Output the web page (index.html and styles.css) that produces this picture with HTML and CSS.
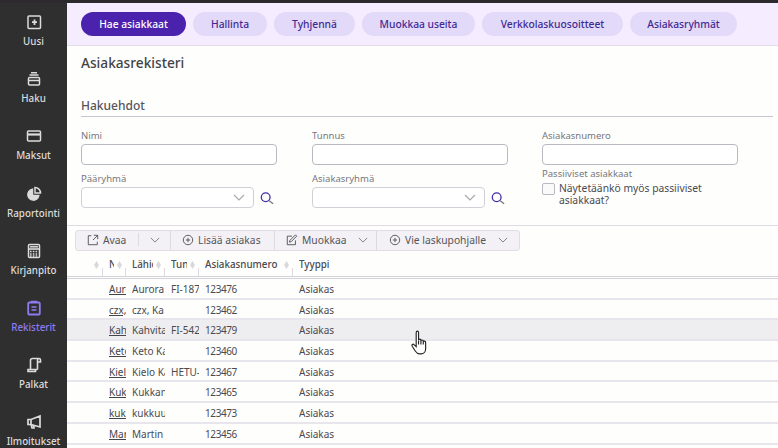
FILE: index.html
```html
<!DOCTYPE html>
<html lang="fi">
<head>
<meta charset="utf-8">
<title>Asiakasrekisteri</title>
<link rel="stylesheet" href="styles.css">
</head>
<body>
<div class="strip"></div>
<div class="app">
  <nav class="side">
    <a class="nav"><svg viewBox="0 0 16 16"><rect x="2" y="2" width="12.500" height="12.500" rx="1"/><path d="M8.500 5.500v5.500M6 8.200h5" stroke-width="1.800"/></svg><span>Uusi</span></a>
    <a class="nav"><svg viewBox="0 0 16 16"><rect x="2.500" y="6.500" width="11" height="7.500" rx="1"/><path d="M2.500 9.500h11M3.500 4h9M5 1.800h6"/></svg><span>Haku</span></a>
    <a class="nav"><svg viewBox="0 0 16 16"><rect x="1.500" y="3" width="13" height="10" rx="1"/><path d="M1.500 6.500h13" stroke-width="2.200"/></svg><span>Maksut</span></a>
    <a class="nav"><svg viewBox="0 0 16 16"><path d="M6.500 3.200a5.500 5.500 0 1 0 6.300 6.300H6.500z" fill="#dcdcdc"/><path d="M9 1.500a5.500 5.500 0 0 1 5.500 5.500H9z"/></svg><span>Raportointi</span></a>
    <a class="nav"><svg viewBox="0 0 16 16"><rect x="2.500" y="1.500" width="11" height="13" rx="1"/><path d="M2.500 6h11" stroke-width="1.600"/><path d="M4 8.500h8M4 11h8M4 13h8" stroke-dasharray="1.600 1.200" stroke-width="1.400"/><path d="M4 3.800h8"/></svg><span>Kirjanpito</span></a>
    <a class="nav on"><svg viewBox="0 0 16 16"><rect x="2.200" y="2.500" width="11.600" height="12" rx="1" stroke-width="1.800"/><path d="M5.500 2.500v-1h5v1M5.500 7h5M5.500 10h5" stroke-width="1.400"/></svg><span>Rekisterit</span></a>
    <a class="nav"><svg viewBox="0 0 16 16"><path d="M4.500 12.500V3.500a2 2 0 0 1 2-2h6.500a1.500 1.500 0 0 1 1.500 1.500v2h-3M11.500 5V3.500a2 2 0 0 1 1-2M11.500 5v7.500M2 12.500h7.500v2H2zM9.500 12.500h2" stroke-width="1.600"/></svg><span>Palkat</span></a>
    <a class="nav"><svg viewBox="0 0 16 16"><path d="M14 2v11L5 10.500H2V5.500h3zM5 5.500v5M5 10.500l1 3.500h2l-.6-2.800" stroke-width="1.700"/></svg><span>Ilmoitukset</span></a>
  </nav>
  <main class="main">
    <header class="bar">
      <button class="pill active">Hae asiakkaat</button>
      <button class="pill w1">Hallinta</button>
      <button class="pill w2">Tyhjennä</button>
      <button class="pill w3">Muokkaa useita</button>
      <button class="pill w4">Verkkolaskuosoitteet</button>
      <button class="pill w5">Asiakasryhmät</button>
    </header>
    <section class="search">
      <h1>Asiakasrekisteri</h1>
      <h2>Hakuehdot</h2>
      <div class="fields">
        <div class="col">
          <label>Nimi</label><div class="input"></div>
          <label class="second">Pääryhmä</label>
          <div class="selrow"><div class="input select"><svg viewBox="0 0 12 7"><path d="M1 1l5 5 5-5"/></svg></div><svg class="lens" viewBox="0 0 16 16"><circle cx="6.500" cy="6.500" r="5"/><path d="M10.500 10.500l4.500 3.500" stroke="#777"/></svg></div>
        </div>
        <div class="col">
          <label>Tunnus</label><div class="input"></div>
          <label class="second">Asiakasryhmä</label>
          <div class="selrow"><div class="input select"><svg viewBox="0 0 12 7"><path d="M1 1l5 5 5-5"/></svg></div><svg class="lens" viewBox="0 0 16 16"><circle cx="6.500" cy="6.500" r="5"/><path d="M10.500 10.500l4.500 3.500" stroke="#777"/></svg></div>
        </div>
        <div class="col">
          <label>Asiakasnumero</label><div class="input"></div>
          <label class="third">Passiiviset asiakkaat</label>
          <div class="check"><span class="box"></span><span class="checktext">Näytetäänkö myös passiiviset asiakkaat?</span></div>
        </div>
      </div>
    </section>
    <section class="results">
      <div class="tools">
        <div class="tool t1"><svg class="ti" viewBox="0 0 14 14"><path d="M5 2H1.500v10.500H12V9M8 1.500h4.500V6M12.500 1.500L7 7"/></svg>Avaa<i class="sep"></i><svg class="chev" viewBox="0 0 12 7"><path d="M1 1l5 5 5-5"/></svg></div>
        <div class="tool t2"><svg class="ti" viewBox="0 0 14 14"><circle cx="7" cy="7" r="5.500"/><path d="M7 4.500v5M4.500 7h5"/></svg>Lisää asiakas</div>
        <div class="tool t3"><svg class="ti" viewBox="0 0 14 14"><path d="M11 7.500v5H1.500V2.500H7M12.500 2.500L6 9l-2 .5.500-2L11 1z"/></svg>Muokkaa<svg class="chev" viewBox="0 0 12 7"><path d="M1 1l5 5 5-5"/></svg></div>
        <div class="tool t4"><svg class="ti" viewBox="0 0 14 14"><circle cx="7" cy="7" r="5.500"/><path d="M7 4.500v5M4.500 7h5"/></svg>Vie laskupohjalle<svg class="chev" viewBox="0 0 12 7"><path d="M1 1l5 5 5-5"/></svg></div>
      </div>
      <div class="grid head">
        <div class="th"><b></b><i class="sort"></i></div>
        <div class="th"><b>Nimi</b><i class="sort"></i></div>
        <div class="th"><b>Lähiosoite</b><i class="sort"></i></div>
        <div class="th"><b>Tunnus</b><i class="sort"></i></div>
        <div class="th"><b>Asiakasnumero</b><i class="sort"></i></div>
        <div class="th last"><b>Tyyppi</b></div>
      </div>
      <div class="grid row"><i></i><a>Aurora Oy</a><span>Aurora</span><span>FI-18765</span><span class="num">123476</span><span>Asiakas</span></div>
      <div class="grid row"><i></i><a>czx, Ka</a><span>czx, Ka</span><span></span><span class="num">123462</span><span>Asiakas</span></div>
      <div class="grid row hover"><i></i><a>Kahvitar</a><span>Kahvitar</span><span>FI-54213</span><span class="num">123479</span><span>Asiakas</span></div>
      <div class="grid row"><i></i><a>Keto Kai</a><span>Keto Kai</span><span></span><span class="num">123460</span><span>Asiakas</span></div>
      <div class="grid row"><i></i><a>Kielo Kai</a><span>Kielo Kai</span><span>HETU-123</span><span class="num">123467</span><span>Asiakas</span></div>
      <div class="grid row"><i></i><a>Kukkanen</a><span>Kukkanen</span><span></span><span class="num">123465</span><span>Asiakas</span></div>
      <div class="grid row"><i></i><a>kukkuu</a><span>kukkuu</span><span></span><span class="num">123473</span><span>Asiakas</span></div>
      <div class="grid row"><i></i><a>Martin</a><span>Martin K</span><span></span><span class="num">123456</span><span>Asiakas</span></div>
      <svg class="cursor" viewBox="0 0 18 26"><path d="M5.500 2.500c0-2 2.500-2 2.500 0v8c0-1.500 2.500-1.500 2.500 0v1c0-1.500 2.500-1.500 2.500 0v1c0-1.300 2.500-1.300 2.500.5v6.500c0 3-2 5.500-5 5.500H9c-2.500 0-3.500-1.500-4.500-3L1.300 17c-1-1.800 1-3 2.200-1.500l2 2z"/><path d="M8 11v4M10.500 11.500V15M13 12.500V15" /></svg>
    </section>
  </main>
</div>
</body>
</html>
```
FILE: styles.css
```css
* { box-sizing: border-box; }
html, body { margin: 0; height: 448px; overflow: hidden; }
body { background: #fefefd; font-family: "Noto Sans", "Open Sans", sans-serif; font-size: 10.500px; color: #4a4a4f; }
.strip { height: 3px; background: #2d2a2e; }
.app { display: flex; height: 445px; overflow: hidden; }

.side { width: 67px; flex: none; background: #2f2f2f; display: flex; flex-direction: column; padding-top: 10px; }
.nav { height: 57.200px; flex: none; display: flex; flex-direction: column; align-items: center; color: #dcdcdc; font-size: 9.800px; font-weight: 500; line-height: 14px; }
.nav svg { width: 16px; height: 16px; margin: 1px 0 5px; fill: none; stroke: #dcdcdc; stroke-width: 1.500; }
.nav.on { color: #8c7cf2; }
.nav.on svg { stroke: #8c7cf2; }

.main { flex: 1; min-width: 0; display: flex; flex-direction: column; }
.bar { height: 43px; flex: none; display: flex; align-items: flex-start; gap: 7px; padding: 9px 0 0 14px; background: #f6ecff; border-bottom: 1px solid #e2dde8; }
.pill { height: 24px; width: 105px; flex: none; padding: 0; border: 0; border-radius: 12px; background: #e3d9f8; color: #3f2a94; font: 500 10.250px "Noto Sans", sans-serif; }
.pill.active { background: #4a22ad; color: #fff; }
.w1 { width: 74px; }
.w2 { width: 81px; }
.w3 { width: 113px; }
.w4 { width: 141px; }
.w5 { width: 107px; }

.search { height: 180px; flex: none; padding: 0 5px 0 14px; border-bottom: 1px solid #dedbe2; }
h1 { margin: 0; padding-top: 8px; height: 50px; font-size: 13.700px; line-height: 18px; font-weight: 500; color: #434347; }
h2 { margin: 0; height: 21px; padding-top: 2px; font-size: 12px; line-height: 16px; font-weight: 500; color: #55555a; border-bottom: 1px solid #c9c5cf; }
.fields { display: flex; gap: 35px; padding-top: 12px; }
.col { width: 196px; flex: none; display: flex; flex-direction: column; }
.col:nth-child(2) { margin-right: -1px; }
label { display: block; height: 13px; line-height: 13px; font-size: 9.500px; color: #77777c; }
.input { height: 21px; margin-top: 2px; border: 1px solid #bcb8c2; border-radius: 4px; background: #fff; flex: none; }
.second { margin-top: 7px; }
.third { margin-top: 2px; }
.selrow { display: flex; align-items: center; gap: 6px; }
.select { width: 173px; display: flex; align-items: center; justify-content: flex-end; padding-right: 8px; border-color: #d2cfd6; }
.select svg { width: 12px; height: 7px; fill: none; stroke: #a9a9ad; stroke-width: 1.200; }
.lens { width: 14px; height: 15px; margin-top: 4px; fill: none; stroke: #3f2fa8; stroke-width: 1.500; }
.check { display: flex; gap: 4px; margin-top: 2px; }
.box { width: 13px; height: 12px; margin-top: 1px; border: 1px solid #bcb8c2; border-radius: 2px; background: #fafafa; flex: none; }
.checktext { width: 170px; line-height: 12px; font-size: 10.300px; color: #4a4a4f; }

.results { flex: 1; position: relative; min-height: 0; overflow: hidden; }
.tools { display: flex; height: 21px; margin: 4px 0 0 8px; width: 445px; background: #f3f1f5; border: 1px solid #e0dde4; border-radius: 3px; font-size: 10.300px; color: #55555a; }
.tool { display: flex; align-items: center; height: 100%; flex: none; padding-bottom: 2px; border-right: 1px solid #dcd9e0; }
.tool:last-child { border-right: 0; }
.ti { width: 12px; height: 12px; margin-right: 4px; fill: none; stroke: #55555a; stroke-width: 1.100; }
.chev { width: 10px; height: 6px; fill: none; stroke: #77777c; stroke-width: 1.100; }
.t1 { width: 95px; padding-left: 11px; }
.t1 .sep { width: 1px; height: 13px; margin: 0 11px 0 12px; background: #dcd9e0; }
.t2 { width: 104px; padding-left: 11px; }
.t3 { width: 102px; padding-left: 11px; }
.t3 .chev { margin-left: 12px; }
.t4 { width: 143px; padding-left: 12px; }
.t4 .chev { margin-left: 12px; }

.grid { display: grid; grid-template-columns: 30px 17px 33px 28px 88px 1fr; column-gap: 6px; padding-left: 6px; }
.head { height: 29px; margin-top: -1px; padding-top: 8px; align-items: stretch; border-bottom: 3px double #d5d1da; }
.th { display: flex; align-items: flex-start; background: linear-gradient(#dcd9e0, #dcd9e0) right bottom / 1px 8px no-repeat; font-size: 9.800px; line-height: 14px; color: #4a4a4f; min-width: 0; }
.th.last { background: none; }
.th b { flex: 1; min-width: 0; overflow: hidden; white-space: nowrap; font-weight: 500; }
.sort { width: 5px; height: 8px; margin: 3px 4px 0 3px; flex: none; background: #d9d9dc; clip-path: polygon(50% 0, 100% 50%, 50% 100%, 0 50%); }
.row { height: 20.700px; align-items: center; padding-top: 1px; border-bottom: 2px solid #e8e5ec; font-size: 10px; color: #4a4a4f; }
.row > * { overflow: hidden; white-space: nowrap; line-height: 14px; }
.row a { color: #44444a; text-decoration: underline; }
.row .num { letter-spacing: -.4px; }
.hover { background: #eeedf0; }
.cursor { position: absolute; left: 344px; top: 104px; width: 17px; height: 25px; fill: #fff; stroke: #222; stroke-width: 1.200; }
```
